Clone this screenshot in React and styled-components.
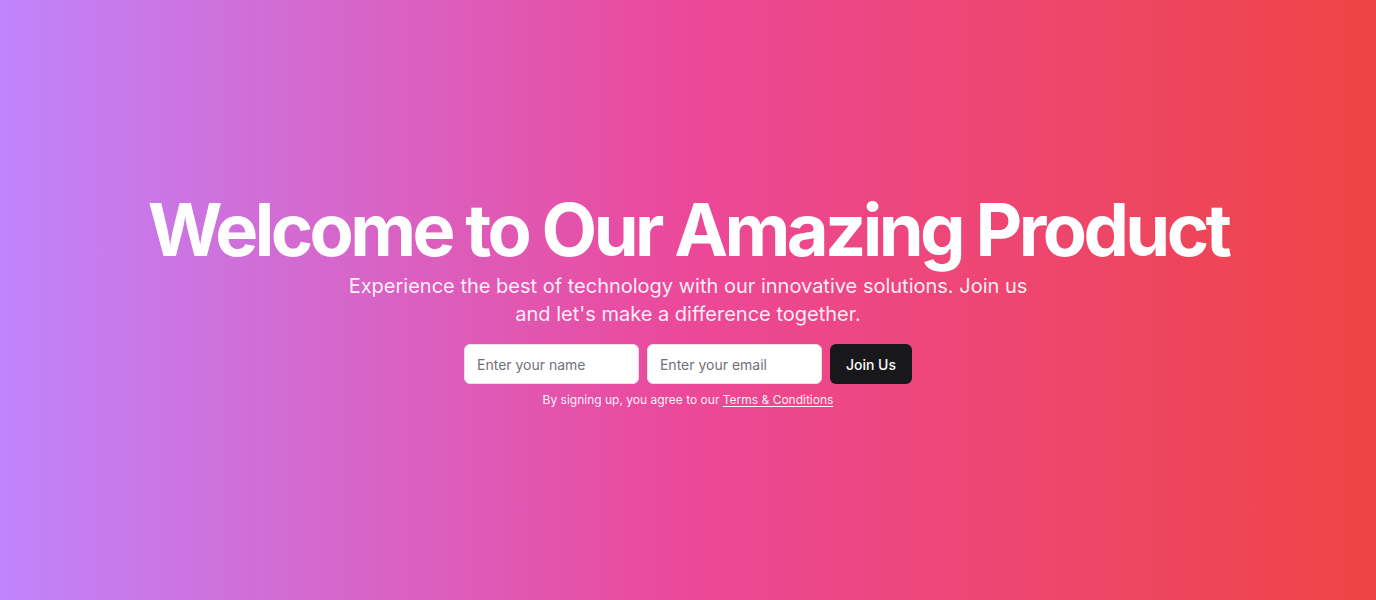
import React from "react";
import styled, { createGlobalStyle } from "styled-components";

const Global = createGlobalStyle`
  * { box-sizing: border-box; }
  html, body { margin: 0; padding: 0; }
  body { font-family: Inter, "Noto Sans", sans-serif; }
`;

const Hero = styled.section`
  width: 100%;
  height: 600px;
  display: flex;
  align-items: center;
  justify-content: center;
  background: linear-gradient(to right, #c084fc, #ec4899, #ef4444);
`;

const Content = styled.div`
  display: flex;
  flex-direction: column;
  align-items: center;
  text-align: center;
  padding: 2px 24px 0;
`;

const Title = styled.h1`
  margin: 0;
  font-size: 72.2px;
  line-height: 1;
  font-weight: 700;
  letter-spacing: -0.05em;
  color: #ffffff;
`;

const Lead = styled.p`
  margin: 6px 0 0;
  max-width: 700px;
  font-size: 20px;
  line-height: 28px;
  color: rgba(255, 255, 255, 0.92);
`;

const Form = styled.form`
  margin-top: 16px;
  width: 448px;
  display: flex;
  gap: 8px;
`;

const Input = styled.input`
  flex: 1;
  min-width: 0;
  height: 40px;
  padding: 8px 12px;
  border: 1px solid #e4e4e7;
  border-radius: 6px;
  background: #ffffff;
  font-family: inherit;
  font-size: 14px;
  color: #09090b;
  outline: none;
  &::placeholder { color: #71717a; }
`;

const Button = styled.button`
  height: 40px;
  padding: 0 16px;
  border: none;
  border-radius: 6px;
  background: #18181b;
  color: #fafafa;
  font-family: inherit;
  font-size: 14px;
  font-weight: 500;
  cursor: pointer;
  white-space: nowrap;
`;

const Note = styled.p`
  margin: 8px 0 0;
  font-size: 12px;
  line-height: 16px;
  color: rgba(255, 255, 255, 0.95);
`;

const Link = styled.a`
  color: inherit;
  text-decoration: underline;
  text-underline-offset: 2px;
`;

export default function App() {
  return (
    <>
      <Global />
      <Hero>
        <Content>
          <Title>Welcome to Our Amazing Product</Title>
          <Lead>
            Experience the best of technology with our innovative solutions. Join us and let's make a
            difference together.
          </Lead>
          <Form onSubmit={(e) => e.preventDefault()}>
            <Input placeholder="Enter your name" type="text" />
            <Input placeholder="Enter your email" type="email" />
            <Button type="submit">Join Us</Button>
          </Form>
          <Note>
            By signing up, you agree to our <Link href="#">Terms &amp; Conditions</Link>
          </Note>
        </Content>
      </Hero>
    </>
  );
}
